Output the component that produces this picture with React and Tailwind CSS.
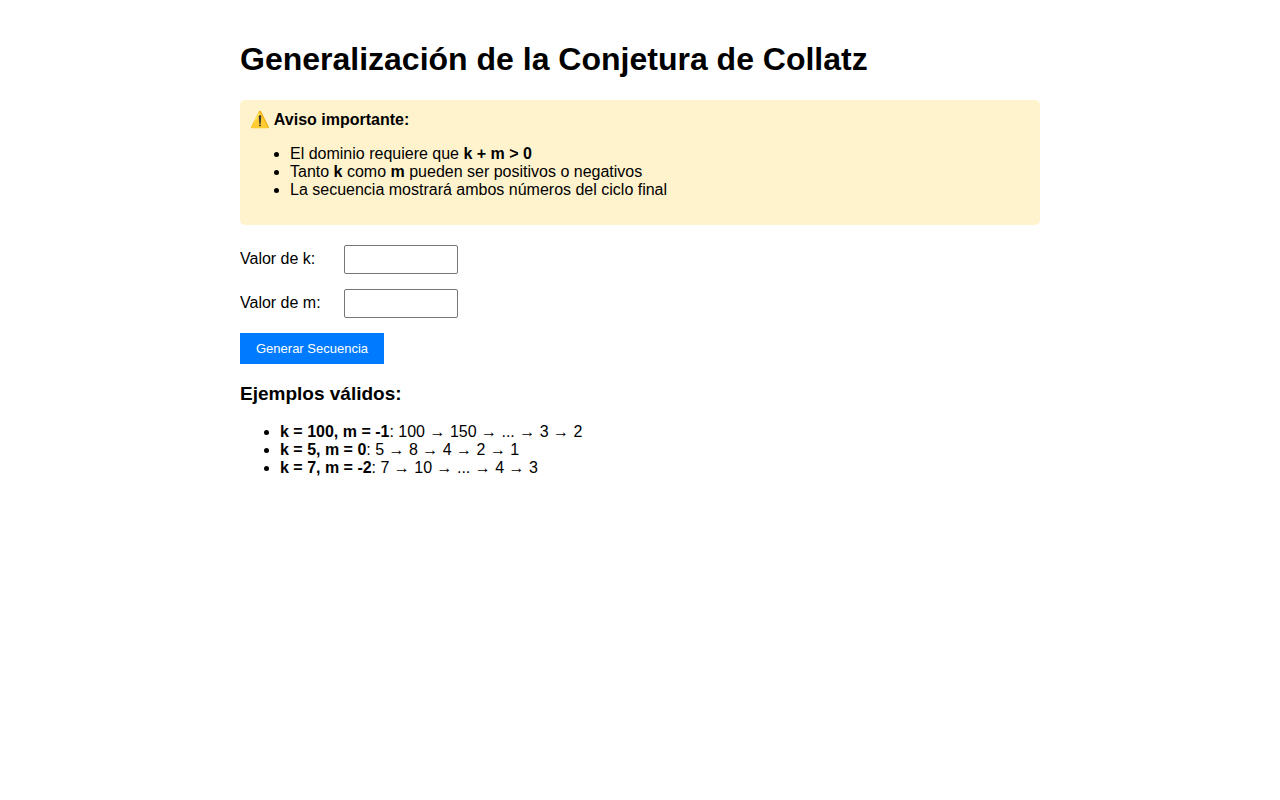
import React, { useState } from 'react';

const notices = [
  <>El dominio requiere que <strong>k + m &gt; 0</strong></>,
  <>Tanto <strong>k</strong> como <strong>m</strong> pueden ser positivos o negativos</>,
  <>La secuencia mostrará ambos números del ciclo final</>,
];

const examples = [
  { params: 'k = 100, m = -1', sequence: '100 → 150 → ... → 3 → 2' },
  { params: 'k = 5, m = 0', sequence: '5 → 8 → 4 → 2 → 1' },
  { params: 'k = 7, m = -2', sequence: '7 → 10 → ... → 4 → 3' },
];

const NumberField = ({ id, label, value, onChange }) => (
  <div className="flex items-start mb-[15px]">
    <label htmlFor={id} className="w-[104px] pt-[5px]">{label}</label>
    <input
      id={id}
      type="number"
      required
      value={value}
      onChange={(e) => onChange(e.target.value)}
      className="w-[114px] h-[29px] px-1.5 text-[13px] bg-white border border-[#767676] rounded-xs"
    />
  </div>
);

const App = () => {
  const [k, setK] = useState('');
  const [m, setM] = useState('');

  return (
    <div className="max-w-[840px] mx-auto p-5 font-['Liberation_Sans',Arial,sans-serif] text-base leading-[18px] text-black">
      <h1 className="mt-5 mb-[22px] text-[32px] leading-[38px] font-bold">
        Generalización de la Conjetura de Collatz
      </h1>

      {/* Notice */}
      <div className="mb-5 p-2.5 rounded-[5px] bg-[#fff3cd]">
        <p className="font-bold leading-5">⚠️ Aviso importante:</p>
        <ul className="mt-[15px] mb-4 pl-10 list-disc">
          {notices.map((notice, i) => (
            <li key={i}>{notice}</li>
          ))}
        </ul>
      </div>

      {/* Form */}
      <form onSubmit={(e) => e.preventDefault()}>
        <NumberField id="k" label="Valor de k:" value={k} onChange={setK} />
        <NumberField id="m" label="Valor de m:" value={m} onChange={setM} />
        <button
          type="submit"
          className="block px-4 py-2 bg-[#007bff] text-white text-[13px] leading-[15px] cursor-pointer"
        >
          Generar Secuencia
        </button>
      </form>

      {/* Examples */}
      <h3 className="mt-[19px] mb-[19px] text-[19px] leading-[21px] font-bold">Ejemplos válidos:</h3>
      <ul className="pl-10 list-disc">
        {examples.map((example) => (
          <li key={example.params}>
            <strong>{example.params}</strong>: {example.sequence}
          </li>
        ))}
      </ul>
    </div>
  );
};

export default App;
